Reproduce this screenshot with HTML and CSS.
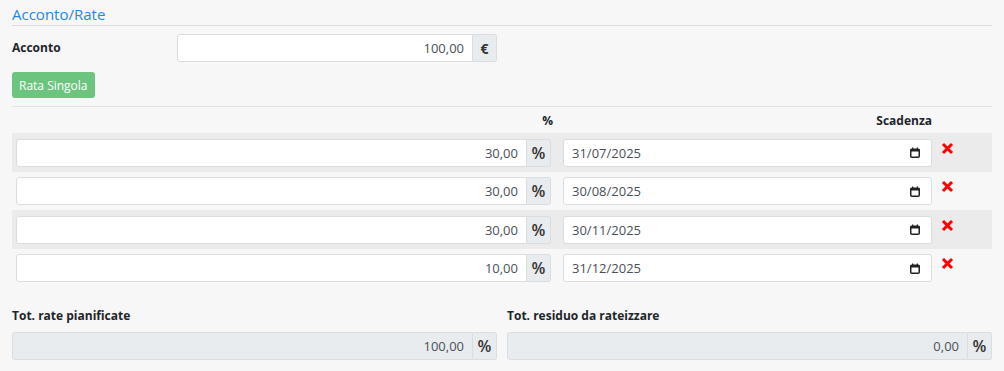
FILE: index.html
```html
<!DOCTYPE html>
<html lang="it">
<head>
  <meta charset="UTF-8" />
  <title>Acconto/Rate</title>
  <link rel="stylesheet" href="styles.css">
</head>
<body>
  <div class="panel">
    <h3 class="section-title">Acconto/Rate</h3>

    <div class="acconto-row">
      <label class="lbl">Acconto</label>
      <div class="input-group">
        <input type="text" class="field num" value="100,00" />
        <span class="addon euro">€</span>
      </div>
    </div>

    <button class="btn-green">Rata Singola</button>

    <div class="rate-table">
      <div class="rate-head">
        <div class="th">%</div>
        <div class="th">Scadenza</div>
        <div></div>
      </div>

      <div class="rate-row">
        <div class="input-group">
          <input type="text" class="field num" value="30,00" />
          <span class="addon">%</span>
        </div>
        <div class="field date"><span>31/07/2025</span><svg class="cal" width="10" height="11" viewBox="0 0 10 11"><rect x="0.75" y="2.25" width="8.5" height="8" rx="1" fill="none" stroke="#222" stroke-width="1.5"/><rect x="0.5" y="2" width="9" height="2.5" fill="#222"/><rect x="2" y="0.5" width="1.3" height="2" fill="#222"/><rect x="6.7" y="0.5" width="1.3" height="2" fill="#222"/></svg></div>
        <a class="del" href="#"><svg width="13" height="13" viewBox="0 0 13 13"><path d="M2 2 L11 11 M11 2 L2 11" stroke="#f00" stroke-width="3"/></svg></a>
      </div>

      <div class="rate-row">
        <div class="input-group">
          <input type="text" class="field num" value="30,00" />
          <span class="addon">%</span>
        </div>
        <div class="field date"><span>30/08/2025</span><svg class="cal" width="10" height="11" viewBox="0 0 10 11"><rect x="0.75" y="2.25" width="8.5" height="8" rx="1" fill="none" stroke="#222" stroke-width="1.5"/><rect x="0.5" y="2" width="9" height="2.5" fill="#222"/><rect x="2" y="0.5" width="1.3" height="2" fill="#222"/><rect x="6.7" y="0.5" width="1.3" height="2" fill="#222"/></svg></div>
        <a class="del" href="#"><svg width="13" height="13" viewBox="0 0 13 13"><path d="M2 2 L11 11 M11 2 L2 11" stroke="#f00" stroke-width="3"/></svg></a>
      </div>

      <div class="rate-row">
        <div class="input-group">
          <input type="text" class="field num" value="30,00" />
          <span class="addon">%</span>
        </div>
        <div class="field date"><span>30/11/2025</span><svg class="cal" width="10" height="11" viewBox="0 0 10 11"><rect x="0.75" y="2.25" width="8.5" height="8" rx="1" fill="none" stroke="#222" stroke-width="1.5"/><rect x="0.5" y="2" width="9" height="2.5" fill="#222"/><rect x="2" y="0.5" width="1.3" height="2" fill="#222"/><rect x="6.7" y="0.5" width="1.3" height="2" fill="#222"/></svg></div>
        <a class="del" href="#"><svg width="13" height="13" viewBox="0 0 13 13"><path d="M2 2 L11 11 M11 2 L2 11" stroke="#f00" stroke-width="3"/></svg></a>
      </div>

      <div class="rate-row">
        <div class="input-group">
          <input type="text" class="field num" value="10,00" />
          <span class="addon">%</span>
        </div>
        <div class="field date"><span>31/12/2025</span><svg class="cal" width="10" height="11" viewBox="0 0 10 11"><rect x="0.75" y="2.25" width="8.5" height="8" rx="1" fill="none" stroke="#222" stroke-width="1.5"/><rect x="0.5" y="2" width="9" height="2.5" fill="#222"/><rect x="2" y="0.5" width="1.3" height="2" fill="#222"/><rect x="6.7" y="0.5" width="1.3" height="2" fill="#222"/></svg></div>
        <a class="del" href="#"><svg width="13" height="13" viewBox="0 0 13 13"><path d="M2 2 L11 11 M11 2 L2 11" stroke="#f00" stroke-width="3"/></svg></a>
      </div>
    </div>

    <div class="totals">
      <div class="tot-col">
        <label class="lbl">Tot. rate pianificate</label>
        <div class="input-group">
          <input type="text" class="field num" value="100,00" disabled />
          <span class="addon">%</span>
        </div>
      </div>
      <div class="tot-col">
        <label class="lbl">Tot. residuo da rateizzare</label>
        <div class="input-group">
          <input type="text" class="field num" value="0,00" disabled />
          <span class="addon">%</span>
        </div>
      </div>
    </div>
  </div>
</body>
</html>
```

FILE: styles.css
```css
html, body {
  margin: 0; padding: 0;
  background: #f7f7f7;
  font-family: "Open Sans", "Liberation Sans", sans-serif;
  font-size: 13px;
  color: #212529;
}
.panel {
  padding: 4px 12px 0 12px;
}
.section-title {
  margin: 0;
  font-size: 15px;
  font-weight: normal;
  line-height: 21px;
  color: #1e88e5;
  border-bottom: 1px solid #dcdcdc;
}
.lbl {
  font-size: 12px;
  font-weight: bold;
  line-height: 18px;
}
.acconto-row {
  display: grid;
  grid-template-columns: 165px 320px;
  align-items: center;
  margin-top: 8px;
}
.input-group {
  display: flex;
  height: 28px;
}
.field {
  box-sizing: border-box;
  height: 28px;
  border: 1px solid #dadde1;
  border-radius: 3px;
  background: #fff;
  font-family: inherit;
  font-size: 13px;
  color: #495057;
  outline: none;
}
.field.num {
  flex: 1;
  min-width: 0;
  text-align: right;
  padding: 0 8px;
  border-radius: 3px 0 0 3px;
}
.field:disabled {
  background: #e9ecef;
  color: #495057;
}
.addon {
  box-sizing: border-box;
  width: 24px;
  display: flex;
  align-items: center;
  justify-content: center;
  background: #e9ecef;
  border: 1px solid #dadde1;
  border-left: none;
  border-radius: 0 3px 3px 0;
  font-weight: 600;
  font-size: 16px;
  color: #333;
}
.addon.euro {
  font-size: 14px;
  font-weight: bold;
}
.btn-green {
  display: block;
  margin-top: 10px;
  height: 26px;
  padding: 0 7px;
  border: none;
  border-radius: 3px;
  background: #6cc57f;
  color: #fff;
  font-family: inherit;
  font-size: 12px;
}
.rate-table {
  margin-top: 8px;
  border-top: 1px solid #e2e2e2;
}
.rate-head, .rate-row {
  display: grid;
  grid-template-columns: 535px 369px 1fr;
  column-gap: 12px;
  padding: 0 4px;
}
.rate-head {
  height: 26px;
  align-items: center;
}
.th {
  font-size: 12px;
  font-weight: bold;
  text-align: right;
}
.th:first-child {
  margin-right: -2px;
}
.rate-row {
  padding-top: 5.5px;
  padding-bottom: 5px;
  align-items: start;
}
.rate-row:nth-child(even) {
  background: #ebebeb;
}
.field.date {
  display: flex;
  align-items: center;
  justify-content: space-between;
  padding: 0 11px 0 8px;
}
.cal {
  display: block;
}
.del {
  display: block;
  width: 13px;
  margin-top: 3px;
  margin-left: -3px;
}
.del svg {
  display: block;
}
.totals {
  display: grid;
  grid-template-columns: 1fr 1fr;
  column-gap: 10px;
  margin-top: 20px;
}
.tot-col {
  display: flex;
  flex-direction: column;
  gap: 7px;
}
```
